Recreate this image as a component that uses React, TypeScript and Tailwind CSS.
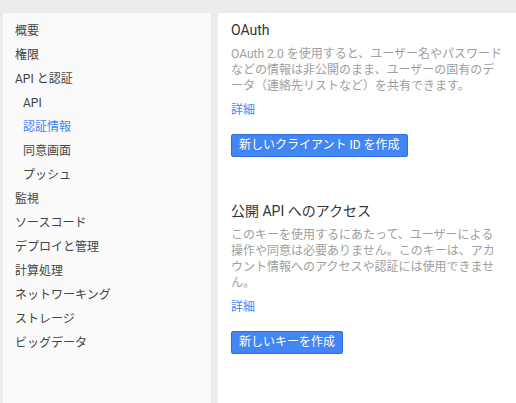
import React from 'react';

type NavItem = { label: string; sub?: boolean; active?: boolean };

const nav: NavItem[] = [
  { label: '概要' },
  { label: '権限' },
  { label: 'API と認証' },
  { label: 'API', sub: true },
  { label: '認証情報', sub: true, active: true },
  { label: '同意画面', sub: true },
  { label: 'プッシュ', sub: true },
  { label: '監視' },
  { label: 'ソースコード' },
  { label: 'デプロイと管理' },
  { label: '計算処理' },
  { label: 'ネットワーキング' },
  { label: 'ストレージ' },
  { label: 'ビッグデータ' },
];

function Section({
  title,
  body,
  button,
  className,
}: {
  title: string;
  body: string;
  button: string;
  className?: string;
}) {
  return (
    <section className={className}>
      <h2 className="text-[14px] leading-[20px] text-[#333]">{title}</h2>
      <p className="mt-[6px] w-[274px] text-[12px] leading-[16px] text-[#9e9e9e]">{body}</p>
      <a className="mt-[8px] block text-[12px] leading-[16px] text-[#4285f4]">詳細</a>
      <button
        type="button"
        className="mt-[16px] h-[23px] rounded-[2px] border border-[#2f6fde] bg-[#4285f4] px-[7px] text-[12px] leading-[21px] text-white"
      >
        {button}
      </button>
    </section>
  );
}

export default function App() {
  return (
    <div
      className="flex h-[403px] w-[516px] gap-[7px] overflow-hidden bg-[#ececec] pl-[3px] pt-[13px]"
      style={{ fontFamily: 'Roboto, "Noto Sans CJK JP", sans-serif' }}
    >
      <nav className="w-[208px] shrink-0 bg-[#fafafa] pt-[6px]">
        {nav.map((item) => (
          <div
            key={item.label}
            className={
              'h-[24px] text-[12px] leading-[24px] ' +
              (item.sub ? 'pl-[20px] ' : 'pl-[12px] ') +
              (item.active ? 'text-[#4285f4]' : 'text-[#444]')
            }
          >
            {item.label}
          </div>
        ))}
      </nav>
      <main className="flex-1 bg-white pl-[13px] pt-[7px]">
        <Section
          title="OAuth"
          body="OAuth 2.0 を使用すると、ユーザー名やパスワードなどの情報は非公開のまま、ユーザーの固有のデータ（連絡先リストなど）を共有できます。"
          button="新しいクライアント ID を作成"
        />
        <Section
          className="mt-[44px]"
          title="公開 API へのアクセス"
          body="このキーを使用するにあたって、ユーザーによる操作や同意は必要ありません。このキーは、アカウント情報へのアクセスや認証には使用できません。"
          button="新しいキーを作成"
        />
      </main>
    </div>
  );
}
